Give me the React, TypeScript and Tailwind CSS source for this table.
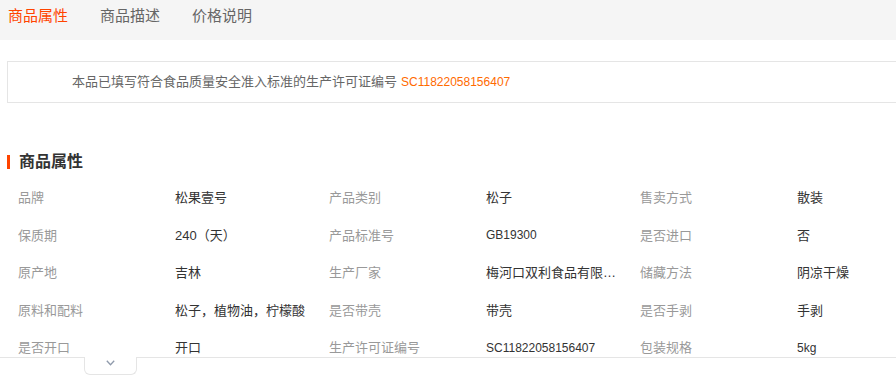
import React from "react";

const tabs = ["商品属性", "商品描述", "价格说明"];

const rows: [string, string][][] = [
  [["品牌", "松果壹号"], ["产品类别", "松子"], ["售卖方式", "散装"]],
  [["保质期", "240（天）"], ["产品标准号", "GB19300"], ["是否进口", "否"]],
  [["原产地", "吉林"], ["生产厂家", "梅河口双利食品有限公司"], ["储藏方法", "阴凉干燥"]],
  [["原料和配料", "松子，植物油，柠檬酸"], ["是否带壳", "带壳"], ["是否手剥", "手剥"]],
  [["是否开口", "开口"], ["生产许可证编号", "SC11822058156407"], ["包装规格", "5kg"]],
];

const isLatin = (s: string) => /^[\x00-\x7f]+$/.test(s);

export default function App() {
  return (
    <div className="w-[896px] h-[375px] overflow-hidden bg-white font-['Liberation_Sans','Noto_Sans_CJK_SC',sans-serif]">
      {/* tab strip */}
      <div className="h-10 bg-[#f5f5f5] flex items-center pl-2 gap-8 pb-[7px] text-[15px]">
        {tabs.map((t, i) => (
          <span key={t} className={i === 0 ? "text-[#ff4400]" : "text-[#666]"}>
            {t}
          </span>
        ))}
      </div>

      {/* licence notice */}
      <div className="ml-[7px] mt-[21px] h-[42px] border border-r-0 border-[#e5e5e5] flex items-center pl-[64px] text-[13px] text-[#666]">
        本品已填写符合食品质量安全准入标准的生产许可证编号
        <span className="ml-1 text-[12px] text-[#ff6a00]">SC11822058156407</span>
      </div>

      {/* section title */}
      <div className="mt-[49px] h-5 flex items-center">
        <span className="ml-[7px] w-[3px] h-[14px] bg-[#ff4400]" />
        <span className="ml-[9px] text-[16px] font-bold text-[#333]">商品属性</span>
      </div>

      {/* attribute table */}
      <div className="mt-[7px] h-[179px] overflow-hidden border-b border-[#e5e5e5]">
        {rows.map((row, ri) => (
          <div key={ri} className="h-[37.5px] flex items-center pl-[18px] text-[13px]">
            {row.map(([k, v]) => (
              <React.Fragment key={k}>
                <span className="w-[157px] shrink-0 text-[#999]">{k}</span>
                <span className="w-[154px] shrink-0">
                  <span
                    className={
                      isLatin(v)
                        ? "block w-[142px] truncate text-[12px] text-[#333]"
                        : "block w-[142px] truncate text-[#333]"
                    }
                  >
                    {v}
                  </span>
                </span>
              </React.Fragment>
            ))}
          </div>
        ))}
      </div>

      {/* expand toggle */}
      <div className="ml-[84px] -mt-px w-[53px] h-[18px] bg-white border border-t-0 border-[#e5e5e5] rounded-b-[6px] flex justify-center pt-[3px]">
        <svg width="9" height="6" viewBox="0 0 9 6" fill="none">
          <path d="M0.8 0.8 L4.5 4.8 L8.2 0.8" stroke="#8f9aab" strokeWidth="1.3" />
        </svg>
      </div>
    </div>
  );
}
